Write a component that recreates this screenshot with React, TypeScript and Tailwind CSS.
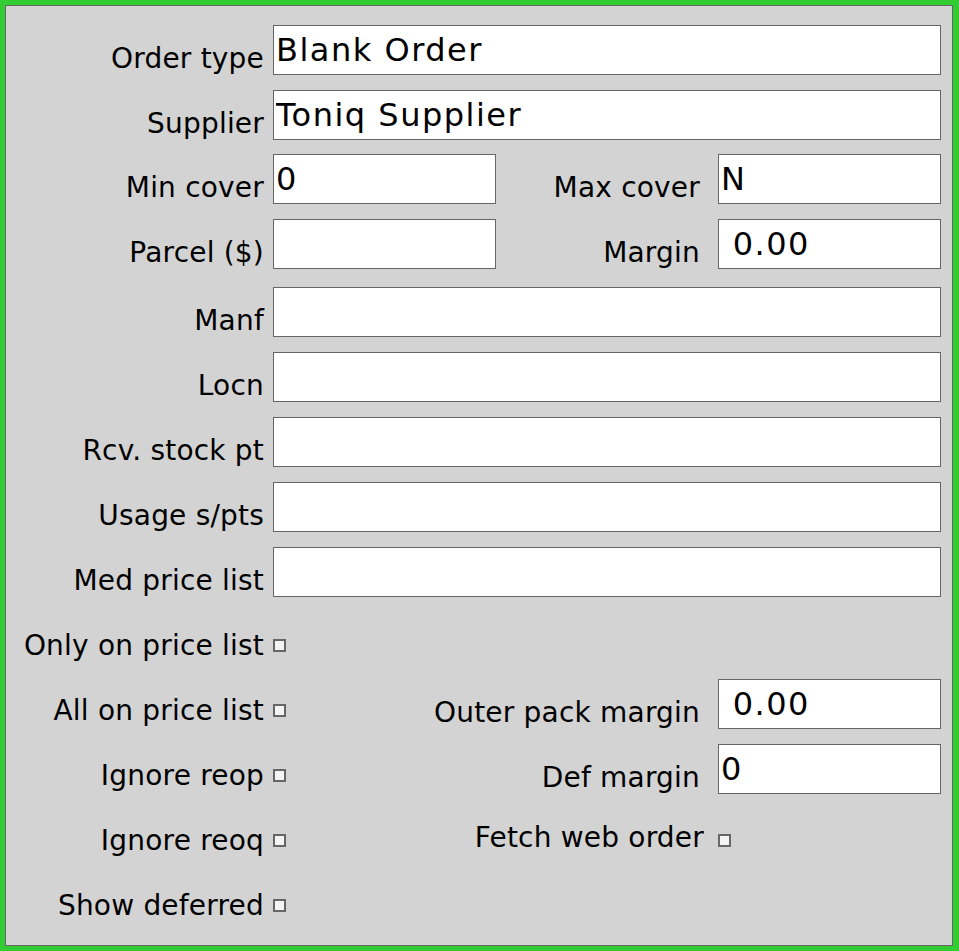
import type { ReactNode } from "react";

const labelCls = "text-right text-[28px] leading-[normal] tracking-[0.2px] whitespace-nowrap text-black";
const inputCls =
  "h-[50px] border border-[#666] bg-white px-[2px] text-[32px] leading-[normal] tracking-[1.5px] text-black outline-none";

function Field({ value, wide }: { value?: string; wide?: boolean }) {
  return (
    <input
      type="text"
      defaultValue={value ?? ""}
      className={`${inputCls} ${wide ? "flex-1 min-w-0" : "w-[223px] shrink-0"}`}
    />
  );
}

function Check() {
  return (
    <input
      type="checkbox"
      className="appearance-none w-[13px] h-[13px] shrink-0 border-2 border-[#666] bg-[#f4f4f4] mb-[10px]"
    />
  );
}

function Row({ label, children, className = "" }: { label: string; children: ReactNode; className?: string }) {
  return (
    <div className={`flex items-end h-[50px] ${className}`}>
      <label className={`w-[258px] shrink-0 ${labelCls}`}>{label}</label>
      <div className="ml-[9px] flex flex-1 items-end h-full">{children}</div>
    </div>
  );
}

function RightPart({
  label,
  children,
  className = "",
  labelClass = "",
}: {
  label: string;
  children: ReactNode;
  className?: string;
  labelClass?: string;
}) {
  return (
    <div className={`flex flex-1 items-end h-full ${className}`}>
      <label className={`flex-1 ${labelCls} ${labelClass}`}>{label}</label>
      <div className="ml-[18px] w-[223px] shrink-0 flex items-end h-full">{children}</div>
    </div>
  );
}

export default function App() {
  return (
    <div className="w-[959px] h-[951px] bg-[#32cd32] pt-[5px] pl-[5px] pr-[6px] pb-[5px] font-['DejaVu_Sans',Verdana,sans-serif]">
      <div className="h-full border border-[#666] bg-[#d3d3d3] pt-[19px] pr-[11px]">
        <Row label="Order type">
          <Field value="Blank Order" wide />
        </Row>
        <Row label="Supplier" className="mt-[15px]">
          <Field value="Toniq Supplier" wide />
        </Row>
        <Row label="Min cover" className="mt-[14px]">
          <Field value="0" />
          <RightPart label="Max cover">
            <Field value="N" wide />
          </RightPart>
        </Row>
        <Row label="Parcel ($)" className="mt-[15px]">
          <Field />
          <RightPart label="Margin">
            <Field value=" 0.00" wide />
          </RightPart>
        </Row>
        <Row label="Manf" className="mt-[18px]">
          <Field wide />
        </Row>
        <Row label="Locn" className="mt-[15px]">
          <Field wide />
        </Row>
        <Row label="Rcv. stock pt" className="mt-[15px]">
          <Field wide />
        </Row>
        <Row label="Usage s/pts" className="mt-[15px]">
          <Field wide />
        </Row>
        <Row label="Med price list" className="mt-[15px]">
          <Field wide />
        </Row>

        <Row label="Only on price list" className="mt-[15px]">
          <Check />
        </Row>
        <Row label="All on price list" className="mt-[15px]">
          <Check />
          <RightPart label="Outer pack margin" className="mb-[-2px]">
            <Field value=" 0.00" wide />
          </RightPart>
        </Row>
        <Row label="Ignore reop" className="mt-[15px]">
          <Check />
          <RightPart label="Def margin" className="mb-[-2px]">
            <Field value="0" wide />
          </RightPart>
        </Row>
        <Row label="Ignore reoq" className="mt-[15px]">
          <Check />
          <RightPart label="Fetch web order" labelClass="-mr-[4px] mb-[3px]">
            <Check />
          </RightPart>
        </Row>
        <Row label="Show deferred" className="mt-[15px]">
          <Check />
        </Row>
      </div>
    </div>
  );
}
